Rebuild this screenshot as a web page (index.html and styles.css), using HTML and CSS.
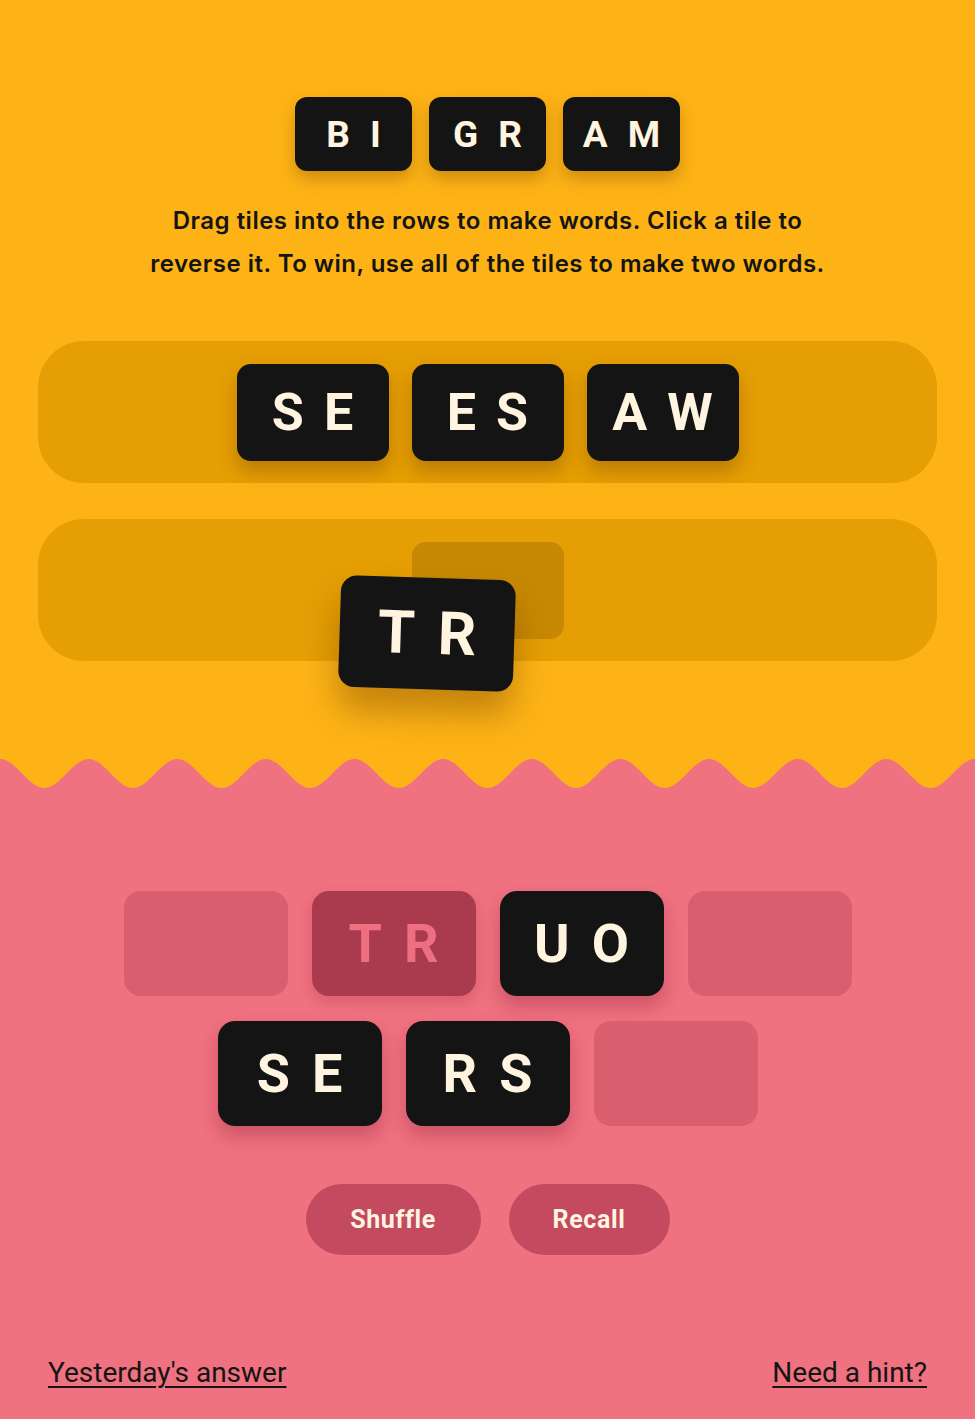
FILE: index.html
```html
<!DOCTYPE html>
<html>
<head>
<meta charset="utf-8">
<link rel="stylesheet" href="styles.css">
</head>
<body>
<div class="top">
  <div class="logo">
    <div class="tile sm"><span>B</span><span>I</span></div>
    <div class="tile sm"><span>G</span><span>R</span></div>
    <div class="tile sm"><span>A</span><span>M</span></div>
  </div>
  <p class="intro">Drag tiles into the rows to make words. Click a tile to<br>reverse it. To win, use all of the tiles to make two words.</p>
  <div class="board">
    <div class="tile lg"><span>S</span><span>E</span></div>
    <div class="tile lg"><span>E</span><span>S</span></div>
    <div class="tile lg"><span>A</span><span>W</span></div>
  </div>
  <div class="board drop">
    <div class="cell"></div>
    <div class="cell ghost"></div>
    <div class="cell"></div>
    <div class="tile lg drag"><span>T</span><span>R</span></div>
  </div>
</div>
<svg class="wave" viewBox="0 0 975 30" preserveAspectRatio="none" aria-hidden="true">
  <path fill="#f07180" d="M0 0 c16 0 28.3 29 44.318 29 s28.3 -29 44.318 -29 s28.3 29 44.318 29 s28.3 -29 44.318 -29 s28.3 29 44.318 29 s28.3 -29 44.318 -29 s28.3 29 44.318 29 s28.3 -29 44.318 -29 s28.3 29 44.318 29 s28.3 -29 44.318 -29 s28.3 29 44.318 29 s28.3 -29 44.318 -29 s28.3 29 44.318 29 s28.3 -29 44.318 -29 s28.3 29 44.318 29 s28.3 -29 44.318 -29 s28.3 29 44.318 29 s28.3 -29 44.318 -29 s28.3 29 44.318 29 s28.3 -29 44.318 -29 s28.3 29 44.318 29 s28.3 -29 44.318 -29 V30 H0 Z"/>
</svg>
<div class="bottom">
  <div class="bank">
    <div class="bank-row">
      <div class="slot"></div>
      <div class="slot held"><span>T</span><span>R</span></div>
      <div class="tile xl"><span>U</span><span>O</span></div>
      <div class="slot"></div>
    </div>
    <div class="bank-row">
      <div class="tile xl"><span>S</span><span>E</span></div>
      <div class="tile xl"><span>R</span><span>S</span></div>
      <div class="slot"></div>
    </div>
  </div>
  <div class="actions">
    <button class="btn shuffle">Shuffle</button>
    <button class="btn recall">Recall</button>
  </div>
  <div class="footer">
    <a href="#" class="link">Yesterday's answer</a>
    <a href="#" class="link">Need a hint?</a>
  </div>
</div>
</body>
</html>
```
FILE: styles.css
```css
* { box-sizing: border-box; }
html, body { margin: 0; padding: 0; }
body {
  width: 975px;
  height: 1419px;
  overflow: hidden;
  font-family: Roboto, "Liberation Sans", sans-serif;
  background: #f07180;
}
.top {
  background: #fdb316;
  padding: 97px 38px 98px;
}
.logo {
  display: flex;
  justify-content: center;
  gap: 17px;
}
.tile {
  background: #141414;
  color: #fff4df;
  display: flex;
  align-items: center;
  justify-content: center;
  font-weight: 700;
}
.tile.sm {
  width: 117px;
  height: 74px;
  border-radius: 12px;
  font-size: 37px;
  gap: 20px;
  box-shadow: 0 8px 16px rgba(120, 70, 0, 0.35);
}
.intro {
  margin: 28px 0 0;
  text-align: center;
  font-family: Inter, Roboto, sans-serif;
  font-size: 24px;
  line-height: 43px;
  font-weight: 600;
  color: #141414;
  letter-spacing: 0.5px;
  white-space: nowrap;
}
.board {
  margin-top: 56px;
  height: 142px;
  border-radius: 46px;
  background: #e59e04;
  display: flex;
  justify-content: center;
  align-items: center;
  gap: 23px;
}
.board.drop {
  margin-top: 36px;
  position: relative;
}
.tile.lg {
  width: 152px;
  height: 97px;
  border-radius: 14px;
  font-size: 52px;
  gap: 20px;
  box-shadow: 0 10px 18px rgba(110, 60, 0, 0.35);
}
.cell {
  width: 152px;
  height: 97px;
  border-radius: 14px;
}
.cell.ghost {
  background: #c78803;
}
.tile.drag {
  position: absolute;
  left: 313px;
  top: 66px;
  transform: rotate(1.8deg) scale(1.15);
  box-shadow: 0 20px 30px rgba(110, 60, 0, 0.4);
  z-index: 2;
}
.wave {
  display: block;
  width: 975px;
  height: 30px;
  background: #fdb316;
  margin-bottom: -1px;
}
.bottom {
  background: #f07180;
  padding-top: 103px;
}
.bank {
  display: flex;
  flex-direction: column;
  align-items: center;
  gap: 25px;
}
.bank-row {
  display: flex;
  gap: 24px;
}
.slot {
  width: 164px;
  height: 105px;
  border-radius: 17px;
  background: #d95e6e;
}
.slot.held {
  background: #aa3b4f;
  color: #ee6f81;
  display: flex;
  align-items: center;
  justify-content: center;
  font-weight: 700;
  font-size: 54px;
  gap: 22px;
  box-shadow: 0 6px 14px rgba(120, 20, 40, 0.2);
}
.tile.xl {
  width: 164px;
  height: 105px;
  border-radius: 17px;
  font-size: 54px;
  gap: 22px;
  box-shadow: 0 10px 18px rgba(120, 20, 40, 0.3);
}
.actions {
  margin-top: 58px;
  display: flex;
  justify-content: center;
  gap: 28px;
}
.btn {
  border: 0;
  height: 71px;
  border-radius: 36px;
  background: #c44b5f;
  color: #fff4df;
  font-family: Roboto, "Liberation Sans", sans-serif;
  font-weight: 700;
  font-size: 25px;
  letter-spacing: 0.6px;
  padding: 0;
}
.btn.shuffle { width: 175px; }
.btn.recall { width: 161px; }
.footer {
  margin-top: 103px;
  display: flex;
  justify-content: space-between;
  padding: 0 48px;
}
.link {
  color: #141414;
  font-size: 28px;
  line-height: 30px;
  text-decoration: underline;
  text-decoration-thickness: 2px;
  text-underline-offset: 4px;
}
```
